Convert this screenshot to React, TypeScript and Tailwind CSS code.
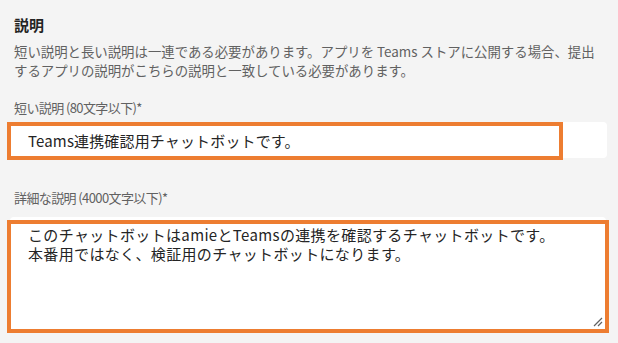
export default function App() {
  return (
    <div
      className="w-[618px] h-[343px] bg-[#f4f4f4] px-[10px] overflow-hidden"
      style={{ fontFamily: '"Noto Sans CJK JP", "Noto Sans", sans-serif' }}
    >
      {/* Section title */}
      <h2 className="ml-[4px] pt-[15px] text-[15px] leading-[20px] font-bold text-[#242424]">説明</h2>

      <p className="ml-[4px] mt-[7px] text-[13.4px] leading-[19px] text-[#616161] w-[590px]">
        短い説明と長い説明は一連である必要があります。アプリを Teams ストアに公開する場合、提出するアプリの説明がこちらの説明と一致している必要があります。
      </p>

      {/* Short description */}
      <div className="ml-[4px] mt-[19px] text-[13px] leading-[18px] tracking-[-0.6px] text-[#616161]">短い説明 (80文字以下)*</div>
      <div className="relative mt-[5px] w-[597px] h-[36px] bg-white rounded-[4px] flex items-center pl-[18px]">
        <span className="text-[15px] leading-[19px] tracking-[0.15px] text-[#242424]">Teams連携確認用チャットボットです。</span>
        <div className="absolute left-[-3px] top-0 w-[556px] h-[38px] border-[4px] border-[#ed7d31]" />
      </div>

      {/* Long description */}
      <div className="ml-[4px] mt-[31px] text-[13px] leading-[18px] tracking-[-0.6px] text-[#616161]">詳細な説明 (4000文字以下)*</div>
      <div className="relative mt-[10px] w-[596px] h-[113px] bg-white rounded-[4px] pl-[18px] pt-[7.5px]">
        <div className="text-[15px] leading-[19px] tracking-[0.35px] text-[#242424]">
          このチャットボットはamieとTeamsの連携を確認するチャットボットです。
          <br />
          本番用ではなく、検証用のチャットボットになります。
        </div>
        <svg className="absolute right-[3px] bottom-[3px]" width="10" height="10" viewBox="0 0 10 10">
          <path d="M1 9 L9 1 M5 9 L9 5" stroke="#616161" strokeWidth="1.2" />
        </svg>
        <div className="absolute left-[-3px] top-[3px] w-[602px] h-[113px] border-[4px] border-[#ed7d31]" />
      </div>
    </div>
  );
}
